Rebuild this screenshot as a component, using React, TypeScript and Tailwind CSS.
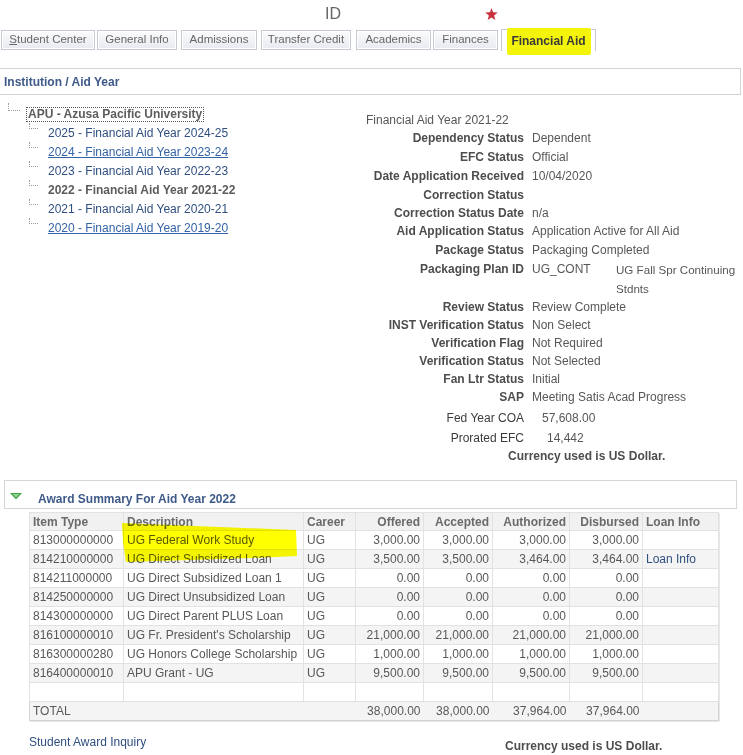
import React from "react";

const tabs = [
  { label: "Student Center", cls: "ml-[1px] w-[94px]" },
  { label: "General Info", cls: "ml-[2px] w-[80px]" },
  { label: "Admissions", cls: "ml-[4px] w-[76px]" },
  { label: "Transfer Credit", cls: "ml-[4px] w-[90px]" },
  { label: "Academics", cls: "ml-[5px] w-[75px]" },
  { label: "Finances", cls: "ml-[2px] w-[65px]" },
];

const years = [
  { label: "2025 - Financial Aid Year 2024-25", kind: "link" },
  { label: "2024 - Financial Aid Year 2023-24", kind: "visited" },
  { label: "2023 - Financial Aid Year 2022-23", kind: "link" },
  { label: "2022 - Financial Aid Year 2021-22", kind: "current" },
  { label: "2021 - Financial Aid Year 2020-21", kind: "link" },
  { label: "2020 - Financial Aid Year 2019-20", kind: "visited" },
];

const details = [
  { label: "Dependency Status", value: "Dependent", h: "h-[18px]" },
  { label: "EFC Status", value: "Official", h: "h-[19px]" },
  { label: "Date Application Received", value: "10/04/2020", h: "h-[19px]" },
  { label: "Correction Status", value: "", h: "h-[19px]" },
  { label: "Correction Status Date", value: "n/a", h: "h-[18px]" },
  { label: "Aid Application Status", value: "Application Active for All Aid", h: "h-[18px]" },
  { label: "Package Status", value: "Packaging Completed", h: "h-[19px]" },
];

const details2 = [
  { label: "Review Status", value: "Review Complete" },
  { label: "INST Verification Status", value: "Non Select" },
  { label: "Verification Flag", value: "Not Required" },
  { label: "Verification Status", value: "Not Selected" },
  { label: "Fan Ltr Status", value: "Initial" },
  { label: "SAP", value: "Meeting Satis Acad Progress" },
];

const awards = [
  ["813000000000", "UG Federal Work Study", "UG", "3,000.00", "3,000.00", "3,000.00", "3,000.00", ""],
  ["814210000000", "UG Direct Subsidized Loan", "UG", "3,500.00", "3,500.00", "3,464.00", "3,464.00", "Loan Info"],
  ["814211000000", "UG Direct Subsidized Loan 1", "UG", "0.00", "0.00", "0.00", "0.00", ""],
  ["814250000000", "UG Direct Unsubsidized Loan", "UG", "0.00", "0.00", "0.00", "0.00", ""],
  ["814300000000", "UG Direct Parent PLUS Loan", "UG", "0.00", "0.00", "0.00", "0.00", ""],
  ["816100000010", "UG Fr. President's Scholarship", "UG", "21,000.00", "21,000.00", "21,000.00", "21,000.00", ""],
  ["816300000280", "UG Honors College Scholarship", "UG", "1,000.00", "1,000.00", "1,000.00", "1,000.00", ""],
  ["816400000010", "APU Grant - UG", "UG", "9,500.00", "9,500.00", "9,500.00", "9,500.00", ""],
  ["", "", "", "", "", "", "", ""],
];

const cell = "border border-[#e2e2e2] px-[3px] py-0 leading-[14px] whitespace-nowrap overflow-hidden";
const totalCell = "border-t border-[#e2e2e2] px-[3px] py-0 leading-[14px]";

function Star() {
  return (
    <svg width="13" height="12" viewBox="0 0 24 23" className="ml-[144px]">
      <polygon
        points="12,0 15,8.2 24,8.6 17,14.2 19.4,23 12,18 4.6,23 7,14.2 0,8.6 9,8.2"
        fill="#c8323c"
      />
    </svg>
  );
}

function Tabs() {
  return (
    <div className="mt-[2px] flex items-start h-[20px] text-[11.5px]">
      {tabs.map((t, i) => (
        <div
          key={t.label}
          className={`${t.cls} h-[20px] border border-[#c5cad3] bg-linear-to-b from-[#fbfbfc] to-[#e7eaef] shadow-[inset_0_0_0_1px_#ffffff] flex items-center justify-center text-[#676767]`}
        >
          {i === 0 ? (
            <span>
              <span className="underline">S</span>tudent Center
            </span>
          ) : (
            t.label
          )}
        </div>
      ))}
      <div className="relative ml-[3px] w-[95px] h-[22px] -mt-[1px] border border-b-0 border-[#c5cad3] bg-white flex items-center justify-center">
        {/* highlighter mark */}
        <span className="absolute left-[5px] -top-[2px] w-[84px] h-[27px] bg-[#f4f40a] rounded-[2px]" />
        <span className="relative font-bold text-[12px] text-[#3a3a3a]">Financial Aid</span>
      </div>
    </div>
  );
}

function Tree() {
  return (
    <div className="w-[366px] pt-[8px]">
      <div className="flex items-start ml-[8px]">
        <div className="w-[12px] h-[8px] border-l border-b border-dotted border-[#9a9a9a]" />
        <span className="ml-[6px] mt-[4px] border border-dotted border-[#555] px-[1px] leading-[13px] font-bold text-[#5c5c5c]">
          APU - Azusa Pacific University
        </span>
      </div>
      <div className="mt-[1px]">
        {years.map((y) => (
          <div key={y.label} className="h-[19px] flex ml-[29px]">
            <div className="w-[9px] h-[6px] border-l border-b border-dotted border-[#9a9a9a]" />
            <span
              className={
                y.kind === "current"
                  ? "ml-[10px] self-center font-bold text-[#5c5c5c]"
                  : y.kind === "visited"
                    ? "ml-[10px] self-center text-[#3463a6] underline"
                    : "ml-[10px] self-center text-[#2f4f80]"
              }
            >
              {y.label}
            </span>
          </div>
        ))}
      </div>
    </div>
  );
}

function Details() {
  return (
    <div className="flex-1 pt-[15px] text-[#575757]">
      <div className="h-[19px] flex items-center">Financial Aid Year 2021-22</div>
      {details.map((d) => (
        <div key={d.label} className={`${d.h} flex items-center`}>
          <span className="w-[158px] text-right font-bold text-[#4d4d4d]">{d.label}</span>
          <span className="pl-[8px]">{d.value}</span>
        </div>
      ))}
      <div className="flex items-start leading-[19px] pt-[1px]">
        <span className="w-[158px] text-right font-bold text-[#4d4d4d]">Packaging Plan ID</span>
        <span className="pl-[8px] w-[92px]">UG_CONT</span>
        <span className="w-[122px] text-[11.6px]">UG Fall Spr Continuing Stdnts</span>
      </div>
      {details2.map((d) => (
        <div key={d.label} className="h-[18px] flex items-center">
          <span className="w-[158px] text-right font-bold text-[#4d4d4d]">{d.label}</span>
          <span className="pl-[8px]">{d.value}</span>
        </div>
      ))}
      <div className="h-[21px] flex items-center mt-[1px]">
        <span className="w-[158px] text-right text-[#3c3c3c]">Fed Year COA</span>
        <span className="pl-[18px]">57,608.00</span>
      </div>
      <div className="h-[19px] flex items-center">
        <span className="w-[158px] text-right text-[#3c3c3c]">Prorated EFC</span>
        <span className="pl-[23px]">14,442</span>
      </div>
      <div className="h-[17px] flex items-center pl-[142px] font-bold text-[#4d4d4d]">
        Currency used is US Dollar.
      </div>
    </div>
  );
}

function AwardTable() {
  return (
    <div className="relative ml-[29px] mt-[3px] w-[689px]">
      <table className="table-fixed border-collapse w-[689px] border border-[#d3d3d3] shadow-[1px_1px_0_#e8e8e8] text-[#585858]">
        <colgroup>
          <col className="w-[94px]" />
          <col className="w-[180px]" />
          <col className="w-[52px]" />
          <col className="w-[68px]" />
          <col className="w-[69px]" />
          <col className="w-[77px]" />
          <col className="w-[73px]" />
          <col className="w-[76px]" />
        </colgroup>
        <thead>
          <tr className="h-[18px] bg-[#f1f1f1] text-[#6a6a6a]">
            <th className={`${cell} text-left font-bold`}>Item Type</th>
            <th className={`${cell} text-left font-bold`}>Description</th>
            <th className={`${cell} text-left font-bold`}>Career</th>
            <th className={`${cell} text-right font-bold`}>Offered</th>
            <th className={`${cell} text-right font-bold`}>Accepted</th>
            <th className={`${cell} text-right font-bold`}>Authorized</th>
            <th className={`${cell} text-right font-bold`}>Disbursed</th>
            <th className={`${cell} text-left font-bold`}>Loan Info</th>
          </tr>
        </thead>
        <tbody>
          {awards.map((r, i) => (
            <tr key={i} className={`h-[19px] ${i % 2 === 1 ? "bg-[#f4f4f4]" : "bg-white"}`}>
              <td className={`${cell} text-left`}>{r[0]}</td>
              <td className={`${cell} text-left`}>{r[1]}</td>
              <td className={`${cell} text-left`}>{r[2]}</td>
              <td className={`${cell} text-right`}>{r[3]}</td>
              <td className={`${cell} text-right`}>{r[4]}</td>
              <td className={`${cell} text-right`}>{r[5]}</td>
              <td className={`${cell} text-right`}>{r[6]}</td>
              <td className={`${cell} text-left text-[#2f4f80]`}>{r[7]}</td>
            </tr>
          ))}
          <tr className="h-[19px] bg-[#f4f4f4]">
            <td colSpan={3} className={`${totalCell} text-left`}>
              TOTAL
            </td>
            <td className={`${totalCell} text-right`}>38,000.00</td>
            <td className={`${totalCell} text-right`}>38,000.00</td>
            <td className={`${totalCell} text-right`}>37,964.00</td>
            <td className={`${totalCell} text-right`}>37,964.00</td>
            <td className={totalCell} />
          </tr>
        </tbody>
      </table>
      {/* highlighter over "UG Federal Work Study" */}
      <svg
        width="176"
        height="39"
        viewBox="0 0 176 39"
        className="absolute left-[93px] top-[11px] mix-blend-multiply pointer-events-none"
      >
        <polygon points="0,0 174,7 175,33 130,35 4,39 1,20" fill="#ffff00" />
      </svg>
    </div>
  );
}

export default function App() {
  return (
    <div className="w-[743px] h-[755px] overflow-hidden bg-white font-['Liberation_Sans',Arial,sans-serif] text-[12px] text-[#555]">
      <div className="h-[28px] flex items-center">
        <span className="ml-[325px] text-[16px] leading-none text-[#666]">ID</span>
        <Star />
      </div>
      <Tabs />
      <div className="mt-[18px] w-[741px] h-[27px] border border-l-0 border-[#d4d4d4] flex items-center pl-[4px] font-bold text-[#3e5a88]">
        Institution / Aid Year
      </div>
      <div className="flex">
        <Tree />
        <Details />
      </div>
      <div className="mt-[16px] ml-[4px] w-[733px] h-[29px] border border-[#d6d6d6] flex items-start pt-[11px]">
        <svg width="12" height="7" viewBox="0 0 12 7" className="ml-[5px] mt-[1px]">
          <polygon points="0,0 12,0 6,6.5" fill="#3fa34a" />
          <polygon points="2.5,1 9.5,1 6,4.8" fill="#8fd38f" />
        </svg>
        <span className="ml-[16px] leading-[14px] font-bold text-[#3e5a88]">
          Award Summary For Aid Year 2022
        </span>
      </div>
      <AwardTable />
      <div className="flex items-start mt-[14px]">
        <a className="w-[505px] pl-[29px] leading-[14px] text-[#2f4f80]">Student Award Inquiry</a>
        <span className="pt-[4px] leading-[14px] font-bold text-[#4d4d4d]">Currency used is US Dollar.</span>
      </div>
    </div>
  );
}
